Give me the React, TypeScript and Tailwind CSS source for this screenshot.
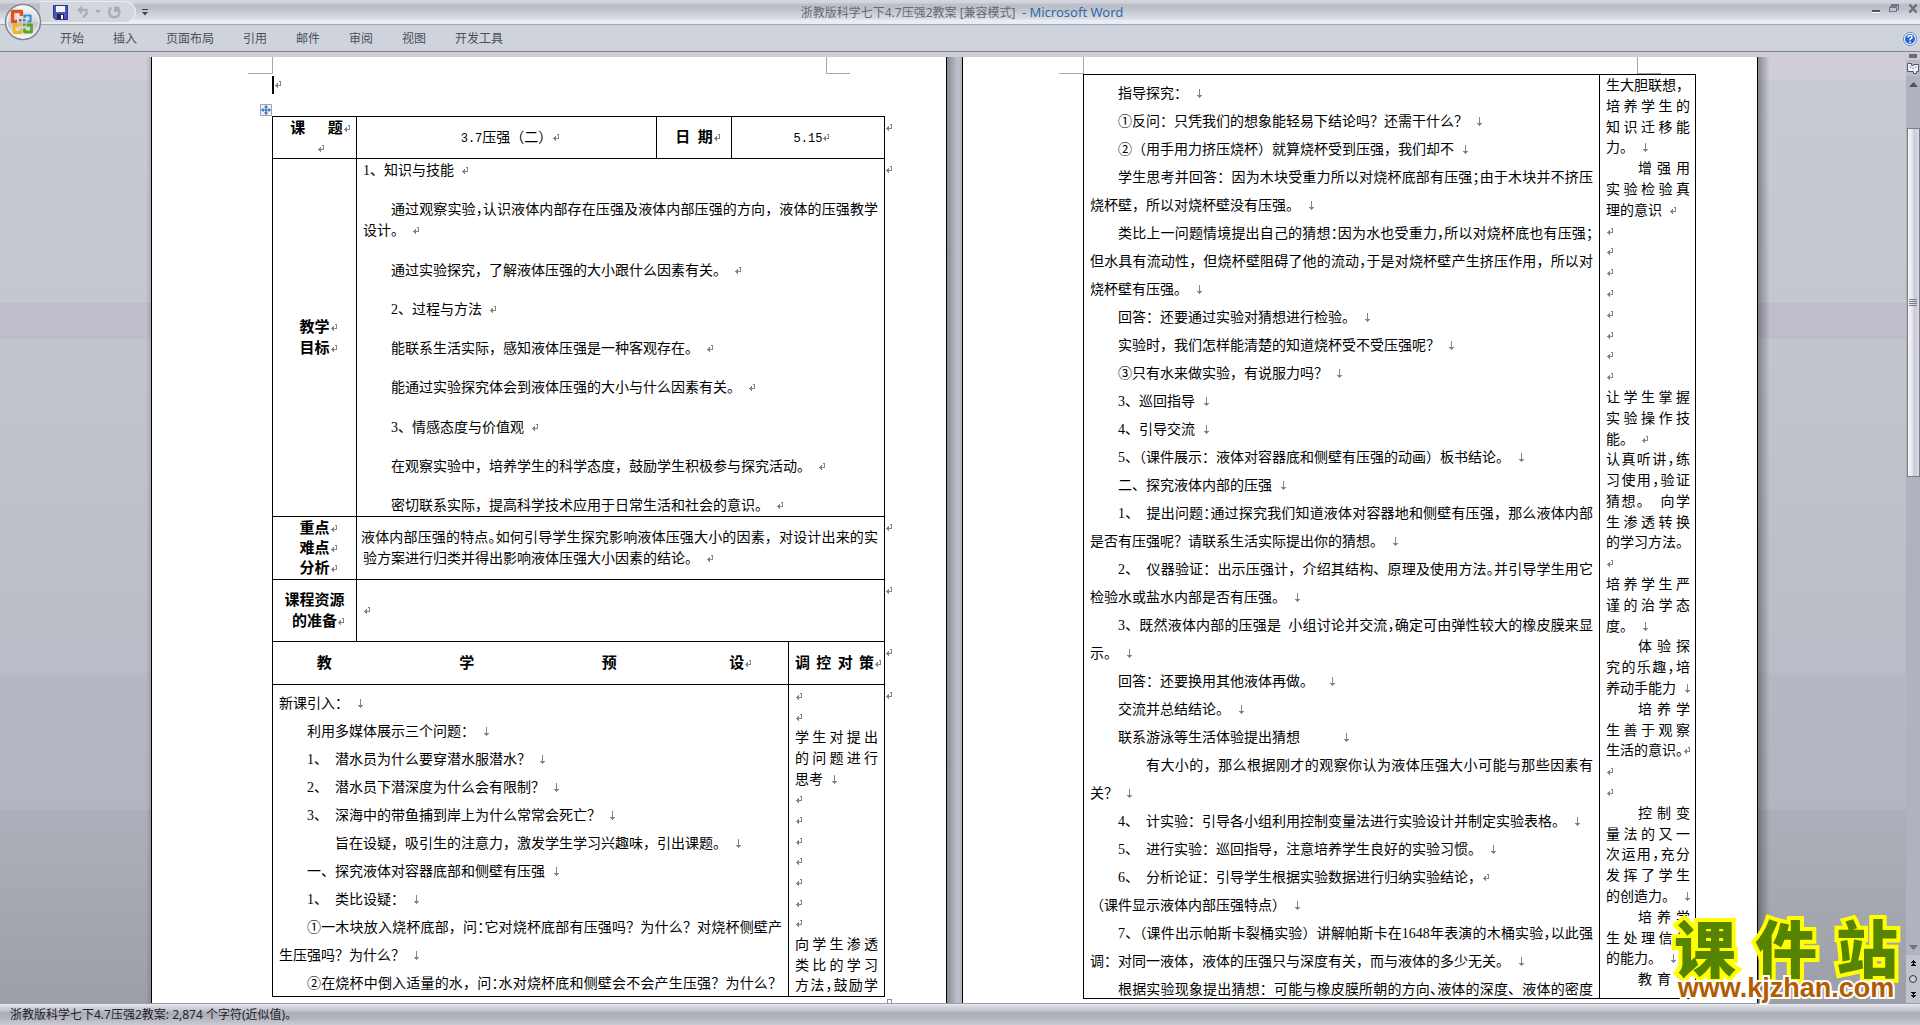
import React from 'react';

type MarkKind = 'para' | 'break';

interface Line {
  // a character in [ ] is set half width, the way Word tightens punctuation
  text?: string;
  mark?: MarkKind;
  fill?: boolean;
  indent?: string;
}

const tabs = ['开始', '插入', '页面布局', '引用', '邮件', '审阅', '视图', '开发工具'];

const lessonLines: Line[] = [
  { text: '新课引入： ', mark: 'break' },
  { text: '利用多媒体展示三个问题： ', mark: 'break', indent: 'pl-7' },
  { text: '1、 潜水员为什么要穿潜水服潜水？ ', mark: 'break', indent: 'pl-7' },
  { text: '2、 潜水员下潜深度为什么会有限制？ ', mark: 'break', indent: 'pl-7' },
  { text: '3、 深海中的带鱼捕到岸上为什么常常会死亡？ ', mark: 'break', indent: 'pl-7' },
  { text: '旨在设疑，吸引生的注意力，激发学生学习兴趣味，引出课题。 ', mark: 'break', indent: 'pl-14' },
  { text: '一、探究液体对容器底部和侧壁有压强 ', mark: 'break', indent: 'pl-7' },
  { text: '1、 类比设疑： ', mark: 'break', indent: 'pl-7' },
  { text: '①一木块放入烧杯底部，问[：]它对烧杯底部有压强吗？为什么？对烧杯侧壁产', fill: true, indent: 'pl-7' },
  { text: '生压强吗？为什么？ ', mark: 'break' },
  { text: '②在烧杯中倒入适量的水，问[：]水对烧杯底和侧壁会不会产生压强？为什么？', fill: true, indent: 'pl-7' },
];

const lessonNotes: Line[] = [
  { mark: 'para' },
  { mark: 'para' },
  { text: '学生对提出', fill: true },
  { text: '的问题进行', fill: true },
  { text: '思考 ', mark: 'break' },
  { mark: 'para' },
  { mark: 'para' },
  { mark: 'para' },
  { mark: 'para' },
  { mark: 'para' },
  { mark: 'para' },
  { mark: 'para' },
  { text: '向学生渗透', fill: true },
  { text: '类比的学习', fill: true },
  { text: '方法[，]鼓励学', fill: true },
];

const inquiryLines: Line[] = [
  { text: '指导探究： ', mark: 'break', indent: 'pl-7' },
  { text: '①反问：只凭我们的想象能轻易下结论吗？还需干什么？ ', mark: 'break', indent: 'pl-7' },
  { text: '②（用手用力挤压烧杯）就算烧杯受到压强，我们却不 ', mark: 'break', indent: 'pl-7' },
  { text: '学生思考并回答：因为木块受重力所以对烧杯底部有压强[；]由于木块并不挤压', fill: true, indent: 'pl-7' },
  { text: '烧杯壁，所以对烧杯壁没有压强。 ', mark: 'break' },
  { text: '类比上一问题情境提出自己的猜想[：]因为水也受重力[，]所以对烧杯底也有压强[；]', fill: true, indent: 'pl-7' },
  { text: '但水具有流动性，但烧杯壁阻碍了他的流动[，]于是对烧杯壁产生挤压作用，所以对', fill: true },
  { text: '烧杯壁有压强。 ', mark: 'break' },
  { text: '回答：还要通过实验对猜想进行检验。 ', mark: 'break', indent: 'pl-7' },
  { text: '实验时，我们怎样能清楚的知道烧杯受不受压强呢？ ', mark: 'break', indent: 'pl-7' },
  { text: '③只有水来做实验，有说服力吗？ ', mark: 'break', indent: 'pl-7' },
  { text: '3、巡回指导 ', mark: 'break', indent: 'pl-7' },
  { text: '4、引导交流 ', mark: 'break', indent: 'pl-7' },
  { text: '5[、]（课件展示：液体对容器底和侧壁有压强的动画）板书结论。 ', mark: 'break', indent: 'pl-7' },
  { text: '二、探究液体内部的压强 ', mark: 'break', indent: 'pl-7' },
  { text: '1、 提出问题[：]通过探究我们知道液体对容器地和侧壁有压强，那么液体内部', fill: true, indent: 'pl-7' },
  { text: '是否有压强呢？请联系生活实际提出你的猜想。 ', mark: 'break' },
  { text: '2、 仪器验证：出示压强计，介绍其结构、原理及使用方法[。]并引导学生用它', fill: true, indent: 'pl-7' },
  { text: '检验水或盐水内部是否有压强。 ', mark: 'break' },
  { text: '3、既然液体内部的压强是 小组讨论并交流[，]确定可由弹性较大的橡皮膜来显', fill: true, indent: 'pl-7' },
  { text: '示。 ', mark: 'break' },
  { text: '回答：还要换用其他液体再做。  ', mark: 'break', indent: 'pl-7' },
  { text: '交流并总结结论。 ', mark: 'break', indent: 'pl-7' },
  { text: '联系游泳等生活体验提出猜想      ', mark: 'break', indent: 'pl-7' },
  { text: '有大小的，那么根据刚才的观察你认为液体压强大小可能与那些因素有', fill: true, indent: 'pl-14' },
  { text: '关？ ', mark: 'break' },
  { text: '4、 计实验：引导各小组利用控制变量法进行实验设计并制定实验表格。 ', mark: 'break', indent: 'pl-7' },
  { text: '5、 进行实验：巡回指导，注意培养学生良好的实验习惯。 ', mark: 'break', indent: 'pl-7' },
  { text: '6、 分析论证：引导学生根据实验数据进行归纳实验结论，', mark: 'para', indent: 'pl-7' },
  { text: '（课件显示液体内部压强特点） ', mark: 'break' },
  { text: '7[、]（课件出示帕斯卡裂桶实验）讲解帕斯卡在1648年表演的木桶实验[，]以此强', fill: true, indent: 'pl-7' },
  { text: '调：对同一液体，液体的压强只与深度有关，而与液体的多少无关。 ', mark: 'break' },
  { text: '根据实验现象提出猜想：可能与橡皮膜所朝的方向[、]液体的深度、液体的密度', fill: true, indent: 'pl-7' },
];

const inquiryNotes: Line[] = [
  { text: '生大胆联想，' },
  { text: '培养学生的', fill: true },
  { text: '知识迁移能', fill: true },
  { text: '力。 ', mark: 'break' },
  { text: '增强用', fill: true, indent: 'pl-8' },
  { text: '实验检验真', fill: true },
  { text: '理的意识 ', mark: 'para' },
  { mark: 'para' },
  { mark: 'para' },
  { mark: 'para' },
  { mark: 'para' },
  { mark: 'para' },
  { mark: 'para' },
  { mark: 'para' },
  { mark: 'para' },
  { text: '让学生掌握', fill: true },
  { text: '实验操作技', fill: true },
  { text: '能。 ', mark: 'para' },
  { text: '认真听讲[，]练', fill: true },
  { text: '习使用[，]验证', fill: true },
  { text: '猜想。 向学', fill: true },
  { text: '生渗透转换', fill: true },
  { text: '的学习方法。' },
  { mark: 'para' },
  { text: '培养学生严', fill: true },
  { text: '谨的治学态', fill: true },
  { text: '度。 ', mark: 'break' },
  { text: '体验探', fill: true, indent: 'pl-8' },
  { text: '究的乐趣[，]培', fill: true },
  { text: '养动手能力 ', mark: 'break' },
  { text: '培养学', fill: true, indent: 'pl-8' },
  { text: '生善于观察', fill: true },
  { text: '生活的意识[。]', mark: 'para' },
  { mark: 'para' },
  { mark: 'para' },
  { text: '控制变', fill: true, indent: 'pl-8' },
  { text: '量法的又一', fill: true },
  { text: '次运用[，]充分', fill: true },
  { text: '发挥了学生', fill: true },
  { text: '的创造力。 ', mark: 'break' },
  { text: '培养学', fill: true, indent: 'pl-8' },
  { text: '生处理信息', fill: true },
  { text: '的能力。 ', mark: 'break' },
  { text: '教育学', fill: true, indent: 'pl-8' },
];

const goals: Line[][] = [
  [{ text: '1、知识与技能 ', mark: 'para' }],
  [
    { text: '通过观察实验[，]认识液体内部存在压强及液体内部压强的方向，液体的压强教学', fill: true, indent: 'pl-7' },
    { text: '设计。 ', mark: 'para' },
  ],
  [{ text: '通过实验探究，了解液体压强的大小跟什么因素有关。 ', mark: 'para', indent: 'pl-7' }],
  [{ text: '2、过程与方法 ', mark: 'para', indent: 'pl-7' }],
  [{ text: '能联系生活实际，感知液体压强是一种客观存在。 ', mark: 'para', indent: 'pl-7' }],
  [{ text: '能通过实验探究体会到液体压强的大小与什么因素有关。 ', mark: 'para', indent: 'pl-7' }],
  [{ text: '3、情感态度与价值观 ', mark: 'para', indent: 'pl-7' }],
  [{ text: '在观察实验中，培养学生的科学态度，鼓励学生积极参与探究活动。 ', mark: 'para', indent: 'pl-7' }],
  [{ text: '密切联系实际，提高科学技术应用于日常生活和社会的意识。 ', mark: 'para', indent: 'pl-7' }],
];

const Mark: React.FC<{ kind: MarkKind }> = ({ kind }) => (
  <span className="inline-block w-0">
    {kind === 'para' ? (
      <svg className="h-2 w-2" viewBox="0 0 8 8" fill="none" stroke="#858585" shapeRendering="crispEdges" aria-hidden="true">
        <path d="M6.5 0V4.5H1M3.5 2V7M2.5 3V6M4.5 .5H7" />
      </svg>
    ) : (
      <svg className="h-[9px] w-2" viewBox="0 0 8 9" fill="none" stroke="#858585" shapeRendering="crispEdges" aria-hidden="true">
        <path d="M4.5 0V9M2 6.5H7M3 7.5H6" />
      </svg>
    )}
  </span>
);

const renderText = (text: string) =>
  text
    .replace(/ /g, '\u2002')
    .split(/\[(.)\]/)
    .map((part, i) =>
      i % 2 ? (
        <span key={i} className="[font-feature-settings:'halt']">{part}</span>
      ) : (
        part
      ),
    );

const TextLine: React.FC<{ line: Line }> = ({ line }) => (
  <p className={`whitespace-pre ${line.indent ?? ''} ${line.fill ? '[text-align-last:justify]' : ''}`}>
    {line.text && renderText(line.text)}
    {line.mark && <Mark kind={line.mark} />}
  </p>
);

const Lines: React.FC<{ lines: Line[] }> = ({ lines }) => (
  <>
    {lines.map((line, i) => (
      <TextLine key={i} line={line} />
    ))}
  </>
);

const RowEnd: React.FC = () => (
  <td className="p-0 pt-[2px] align-top leading-[18px]">
    <Mark kind="para" />
  </td>
);

const Corners: React.FC = () => (
  <div className="flex h-[17px] shrink-0 justify-between px-[96px]">
    <span className="w-[25px] border-r border-b border-[#a6a6b0]" />
    <span className="w-[24px] border-b border-l border-[#a6a6b0]" />
  </div>
);

const TitleBar: React.FC = () => (
  <header className="grid h-[25px] shrink-0 grid-cols-[1fr_auto_1fr] items-center border-b border-[#a3a7b2] bg-[linear-gradient(#d4d7df,#d0d3db_3px,#bcbfc7_4px,#bdc1c9_9px,#cdd1d9_14px,#dadde3_19px,#e8ecf3_20px,#e8ecf3_24px)]">
    <div className="flex h-full items-start pl-[40px]">
      <div className="mt-px flex h-[22px] w-[96px] items-center gap-[5px] rounded-r-full border border-l-0 border-[#eceef3] bg-[#d3d6de] pl-[13px]">
        <button aria-label="保存">
          <svg className="h-[15px] w-[15px]" viewBox="0 0 15 15" aria-hidden="true">
            <path d="M.5.5h14v14h-12l-2-2z" fill="#4a55c4" stroke="#2b338f" />
            <path d="M3 1h9v6H3z" fill="#f1f4fb" />
            <path d="M4 9h7v5H4z" fill="#20264f" />
            <path d="M8 10h2v4H8z" fill="#fff" />
          </svg>
        </button>
        <button aria-label="撤销" className="ml-1">
          <svg className="h-[14px] w-[13px]" viewBox="0 0 13 14" fill="none" stroke="#a9aebb" strokeWidth="2.4" aria-hidden="true">
            <path d="M4 5h5.500v3.500L6 12.500" />
            <path d="M0 5l5-4.500v9z" fill="#a9aebb" stroke="none" />
          </svg>
        </button>
        <svg className="h-[4px] w-[6px]" viewBox="0 0 6 4" fill="#a6abb7" aria-hidden="true">
          <path d="M0 0h6L3 3.5z" />
        </svg>
        <button aria-label="重复" className="ml-[2px]">
          <svg className="h-[14px] w-[13px]" viewBox="0 0 13 14" fill="none" stroke="#a9aebb" strokeWidth="2.6" aria-hidden="true">
            <path d="M3 2.500C0 6 1 12 6 12.300c5.500 0 6.500-5 4-8.300" />
            <path d="M6 1.500h5.500V7H6z" fill="#a9aebb" stroke="none" />
          </svg>
        </button>
      </div>
      <button aria-label="自定义快速访问工具栏" className="mt-[9px] ml-[6px]">
        <svg className="h-[7px] w-[6px]" viewBox="0 0 6 7" fill="#3c4048" aria-hidden="true">
          <path d="M0 0h6v1H0zM0 3h6L3 6.5z" />
        </svg>
      </button>
    </div>
    <h1 className="pt-[2px] pl-[4px] text-xs whitespace-pre text-[#656973]">
      浙教版科学七下4.7压强2教案 [兼容模式]
      <span className="pl-[3px] text-[13px] text-[#2f69ab]"> - Microsoft Word</span>
    </h1>
    <div className="flex h-full items-start justify-end gap-[9px] pt-[4px] pr-[2px]">
      <button aria-label="最小化">
        <svg className="h-[9px] w-[8px]" viewBox="0 0 8 9" aria-hidden="true">
          <path d="M0 6h8v2H0z" fill="#4d525d" />
          <path d="M0 8h8v1H0z" fill="#fff" />
        </svg>
      </button>
      <button aria-label="还原">
        <svg className="h-[9px] w-[10px]" viewBox="0 0 10 9" fill="none" stroke="#6e7687" shapeRendering="crispEdges" aria-hidden="true">
          <path d="M2.5 2V.5h7v5H8M.5 3.5h7v4h-7zM.5 2.5h7M2 1.5h7" />
        </svg>
      </button>
      <button aria-label="关闭">
        <svg className="h-[9px] w-[10px]" viewBox="0 0 10 9" fill="none" stroke="#6a7080" strokeWidth="2.4" aria-hidden="true">
          <path d="M1.5.5l7 8M8.5.5l-7 8" />
        </svg>
      </button>
    </div>
  </header>
);

const OfficeButton: React.FC = () => (
  <button aria-label="Office 按钮" className="absolute top-[3px] left-[4px]">
    <svg className="h-[38px] w-[38px]" viewBox="0 0 38 38" fill="none" aria-hidden="true">
      <defs>
        <linearGradient id="orb" x1="0" y1="0" x2="0" y2="1">
          <stop offset="0" stopColor="#fafbfc" />
          <stop offset=".45" stopColor="#d9dbe0" />
          <stop offset=".55" stopColor="#c3c6cd" />
          <stop offset="1" stopColor="#ffffff" />
        </linearGradient>
      </defs>
      <circle cx="19" cy="19" r="17.5" fill="url(#orb)" stroke="#83878f" strokeWidth="1.5" />
      <circle cx="19" cy="19" r="16" stroke="#f4f5f7" />
      <path d="M13 18.500H8.500V8.500h9V13" stroke="#e2501c" strokeWidth="3.4" strokeLinejoin="round" />
      <path d="M20.500 15v-2.500h6V18.500H23.500" stroke="#3b8bd0" strokeWidth="2.2" strokeLinejoin="round" />
      <path d="M14.500 22.500H10v7h7V26" stroke="#f4b51c" strokeWidth="2.8" strokeLinejoin="round" />
      <path d="M22.500 22h5v7h-7v-3.500" stroke="#5da32c" strokeWidth="2.8" strokeLinejoin="round" />
      <path d="M15 16h2.500v2.500H15z" fill="#e2501c" />
      <path d="M19 16h2.500v2.500H19z" fill="#3b8bd0" />
      <path d="M15 20.500h2.500V23H15z" fill="#f4b51c" />
      <path d="M19 20.500h2.500V23H19z" fill="#5da32c" />
    </svg>
  </button>
);

const Ribbon: React.FC = () => (
  <nav className="flex h-[27px] shrink-0 items-center border-b border-[#7f838b] bg-[#cfd3dc] pt-px pr-[3px] pl-[60px]">
    <div className="flex flex-1 gap-[29px] text-xs text-[#4b4f59]">
      {tabs.map((tab) => (
        <button key={tab}>{tab}</button>
      ))}
    </div>
    <button aria-label="帮助">
      <svg className="h-[14px] w-[14px]" viewBox="0 0 14 14" fill="none" aria-hidden="true">
        <circle cx="7" cy="7" r="6.5" fill="#fff" stroke="#5a86c8" />
        <circle cx="7" cy="7" r="5" fill="#2363d6" />
        <path d="M5 5.500C5 3 9 3 9 5.200 9 6.500 7 6.500 7 8.200M7 9.300V11" stroke="#fff" strokeWidth="1.5" />
      </svg>
    </button>
  </nav>
);

const LessonPage: React.FC = () => (
  <section className="w-[796px] shrink-0 border-x border-black bg-white">
    <Corners />
    <div className="flex h-[30px] items-start pt-[2px] pl-[120px]">
      <span className="h-[18px] w-[2px] bg-black" />
      <span className="leading-[18px]"><Mark kind="para" /></span>
    </div>
    <button aria-label="移动表格" className="ml-[108px] block h-[12px] w-[12px]">
      <svg className="h-[12px] w-[12px]" viewBox="0 0 12 12" fill="none" aria-hidden="true">
        <path d="M.5.5h11v11H.5z" fill="#f2f3f7" stroke="#9ea2ac" />
        <path d="M6 2v8M2 6h8" stroke="#2c5fc4" strokeWidth="1.2" />
        <path d="M6 1L4 3.500h4zM6 11L4 8.500h4zM1 6l2.500-2v4zM11 6L8.500 4v4z" fill="#2c5fc4" />
      </svg>
    </button>
    <table className="ml-[120px] w-[622px] table-fixed border-collapse">
      <colgroup>
        <col className="w-[84px]" />
        <col className="w-[300px]" />
        <col className="w-[75px]" />
        <col className="w-[57px]" />
        <col className="w-[96px]" />
        <col className="w-[10px]" />
      </colgroup>
      <tbody>
        <tr className="h-[42px]">
          <th className="border border-black p-0 pl-[4px] text-[15px] leading-5 whitespace-pre">
            {renderText('课   题')}<Mark kind="para" />
            <br />
            <Mark kind="para" />
          </th>
          <td className="border border-black p-0 text-center">
            <span className="font-['Liberation_Mono'] text-xs">3.7</span>压强（二）<Mark kind="para" />
          </td>
          <th className="border border-black p-0 text-[15px]">
            {renderText('日 期')}<Mark kind="para" />
          </th>
          <td colSpan={2} className="border border-black p-0 text-center">
            <span className="font-['Liberation_Mono'] text-xs">5.15</span><Mark kind="para" />
          </td>
          <RowEnd />
        </tr>
        <tr className="h-[358px]">
          <th className="border border-black p-0 text-[15px]">
            教学<Mark kind="para" /><br />目标<Mark kind="para" />
          </th>
          <td colSpan={4} className="border border-black px-[6px] py-0">
            <div className="flex h-[357px] flex-col justify-between pt-px">
              {goals.map((goal, i) => (
                <div key={i}>
                  <Lines lines={goal} />
                </div>
              ))}
            </div>
          </td>
          <RowEnd />
        </tr>
        <tr className="h-[63px]">
          <th className="border border-black p-0 text-[15px] leading-5">
            重点<Mark kind="para" /><br />难点<Mark kind="para" /><br />分析<Mark kind="para" />
          </th>
          <td colSpan={4} className="border border-black py-0 pr-[6px] pl-1">
            <TextLine line={{ text: '液体内部压强的特点[。]如何引导学生探究影响液体压强大小的因素，对设计出来的实', fill: true }} />
            <TextLine line={{ text: '验方案进行归类并得出影响液体压强大小因素的结论。 ', mark: 'para', indent: 'pl-[2px]' }} />
          </td>
          <RowEnd />
        </tr>
        <tr className="h-[62px]">
          <th className="border border-black p-0 text-[15px]">
            课程资源<br />的准备<Mark kind="para" />
          </th>
          <td colSpan={4} className="border border-black px-[6px] py-0">
            <Mark kind="para" />
          </td>
          <RowEnd />
        </tr>
        <tr className="h-[43px]">
          <th colSpan={4} className="border border-black p-0 text-[15px] whitespace-pre">
            {renderText('教                 学                 预               设')}<Mark kind="para" />
          </th>
          <th className="border border-black p-0 pr-[10px] pl-[6px] text-[15px]">
            <div className="flex items-baseline">
              <span className="flex-1 [text-align-last:justify]">调控对策</span>
              <Mark kind="para" />
            </div>
          </th>
          <RowEnd />
        </tr>
        <tr className="h-[312px]">
          <td colSpan={4} className="border border-black px-[6px] py-0 align-top">
            <div className="h-[311px] overflow-hidden pt-[5px] leading-[28px]">
              <Lines lines={lessonLines} />
            </div>
          </td>
          <td className="border border-black px-[6px] py-0">
            <div className="grid h-[311px] auto-rows-fr pt-px">
              <Lines lines={lessonNotes} />
            </div>
          </td>
          <RowEnd />
        </tr>
      </tbody>
    </table>
    <div className="mt-[2px] ml-[735px] h-2 w-[5px] border border-[#8a8a8a]" />
  </section>
);

const InquiryPage: React.FC = () => (
  <section className="w-[796px] shrink-0 border-x border-black bg-white">
    <Corners />
    <table className="ml-[120px] w-[612px] table-fixed border-collapse">
      <colgroup>
        <col className="w-[516px]" />
        <col className="w-[96px]" />
      </colgroup>
      <tbody>
        <tr>
          <td className="border border-black px-[6px] py-0 align-top">
            <div className="h-[923px] overflow-hidden pt-[5px] leading-[28px]">
              <Lines lines={inquiryLines} />
            </div>
          </td>
          <td className="border border-black px-[6px] py-0 align-top">
            <div className="grid h-[915px] auto-rows-fr">
              <Lines lines={inquiryNotes} />
            </div>
          </td>
        </tr>
      </tbody>
    </table>
  </section>
);

const ScrollBar: React.FC = () => (
  <aside className="flex w-[14px] shrink-0 flex-col items-center bg-[#b0b3bd]">
    <div className="flex h-2 w-full shrink-0 items-center justify-center bg-[#cfccd8]">
      <span className="h-1 w-2 bg-[#6b6d73]" />
    </div>
    <button aria-label="标尺" className="flex h-4 w-full shrink-0 items-center justify-center bg-[#b9bcc5]">
      <svg className="h-[12px] w-[12px]" viewBox="0 0 12 12" fill="#eef1f6" stroke="#4b5a76" aria-hidden="true">
        <path d="M.5 1.5h4v2h2v-1h5v7h-2v2h-3v-2h-6z" />
        <path d="M3 4.500l1 1.500M5.500 5.500l1 1.500M9 4.500l-1 1.500" stroke="#8d6f8a" />
      </svg>
    </button>
    <button aria-label="向上滚动" className="flex h-4 w-full shrink-0 items-center justify-center">
      <svg className="h-[5px] w-[9px]" viewBox="0 0 9 5" fill="#50545e" aria-hidden="true">
        <path d="M0 5h9L4.5 0z" />
      </svg>
    </button>
    <div className="mt-[36px] flex h-[349px] w-[13px] shrink-0 flex-col items-center justify-center gap-px border border-[#7b7e86] bg-[linear-gradient(90deg,#fbf8e6,#ebeaf2_30%,#c9ccd9_60%,#d9dce4)]">
      <span className="h-px w-2 bg-[#777b85]" />
      <span className="h-px w-2 bg-[#777b85]" />
      <span className="h-px w-2 bg-[#777b85]" />
      <span className="h-px w-2 bg-[#777b85]" />
    </div>
    <div className="flex-1" />
    <button aria-label="向下滚动" className="flex h-4 w-full shrink-0 items-center justify-center">
      <svg className="h-[5px] w-[9px]" viewBox="0 0 9 5" fill="#6b7180" aria-hidden="true">
        <path d="M0 0h9L4.5 5z" />
      </svg>
    </button>
    <button aria-label="前一页" className="flex h-4 w-full shrink-0 items-center justify-center bg-[#c0c2cd]">
      <svg className="h-[7px] w-[5px]" viewBox="0 0 5 7" fill="#111" shapeRendering="crispEdges" aria-hidden="true">
        <path d="M2 0h1v1h1v1h1v1H3v1h1v1h1v1H0V5h1V4h1V3H0V2h1V1h1z" />
      </svg>
    </button>
    <button aria-label="选择浏览对象" className="flex h-4 w-full shrink-0 items-center justify-center bg-[#c0c2cd]">
      <svg className="h-[8px] w-[8px]" viewBox="0 0 8 8" aria-hidden="true">
        <circle cx="4" cy="4" r="3.5" fill="#c9ccd2" stroke="#33363c" />
      </svg>
    </button>
    <button aria-label="下一页" className="flex h-4 w-full shrink-0 items-center justify-center bg-[#c0c2cd]">
      <svg className="h-[7px] w-[5px]" viewBox="0 0 5 7" fill="#111" shapeRendering="crispEdges" aria-hidden="true">
        <path d="M0 0h5v1H4v1H3v1h2v1H4v1H3v1H2V5H1V4H0V3h2V2H1V1H0z" />
      </svg>
    </button>
  </aside>
);

const Watermark: React.FC = () => (
  <div className="absolute right-[18px] bottom-[24px] w-[232px] font-bold">
    <div className="flex justify-between px-1 text-[62px] leading-[52px] font-black text-[#578400] [-webkit-text-stroke:8px_#ffff00] [paint-order:stroke_fill]">
      <span>课</span>
      <span>件</span>
      <span>站</span>
    </div>
    <div className="text-center font-['Liberation_Sans'] text-[27px] leading-[26px] text-[#b15c00] [-webkit-text-stroke:4px_#ffffff] [paint-order:stroke_fill]">
      www.kjzhan.com
    </div>
  </div>
);

export default function App() {
  return (
    <div className="relative flex h-screen flex-col overflow-hidden font-['Noto_Sans','Noto_Sans_CJK_SC',sans-serif]">
      <TitleBar />
      <Ribbon />
      <OfficeButton />
      <main className="flex min-h-0 flex-1 bg-[linear-gradient(#d0cdd8_28px,#c8cad3_28px,#c4c7cf_251px,#bfbccb_251px,#bfbccb_287px,#c2c5cd_287px,#bdc0c8_482px,#babdc7_621px,#b5b8c2_621px,#b3b6c0_758px,#acafb9_758px,#a8abb3_821px,#9c9fa7_951px)] font-['Liberation_Serif','Noto_Sans_CJK_SC',sans-serif] text-[14px] leading-[21px] text-black [text-spacing-trim:space-all]">
        <div className="flex min-w-0 flex-1 flex-col">
          <div className="h-[5px] shrink-0 bg-[#d0cdd8]" />
          <div className="flex min-h-0 flex-1 overflow-hidden">
            <div className="w-[151px] shrink-0 bg-[linear-gradient(90deg,transparent_146px,#00000022)]" />
            <LessonPage />
            <div className="w-[15px] shrink-0 bg-[linear-gradient(90deg,#888b92,#bfc2ce_70%,#b0b3bd)]" />
            <InquiryPage />
            <div className="flex-1 bg-[linear-gradient(90deg,#00000055,transparent_12px)]" />
          </div>
        </div>
        <ScrollBar />
      </main>
      <footer className="flex h-[22px] shrink-0 items-center border-t border-[#9b9ea8] bg-[linear-gradient(#e6e8ed,#cdd0d8_4px,#b7bac3_8px,#a9acb5_9px,#b3b6be_14px,#c9cbd5_21px)] pl-[10px] text-xs text-[#1f2228]">
        浙教版科学七下4.7压强2教案: 2,874 个字符(近似值)。
      </footer>
      <Watermark />
    </div>
  );
}
